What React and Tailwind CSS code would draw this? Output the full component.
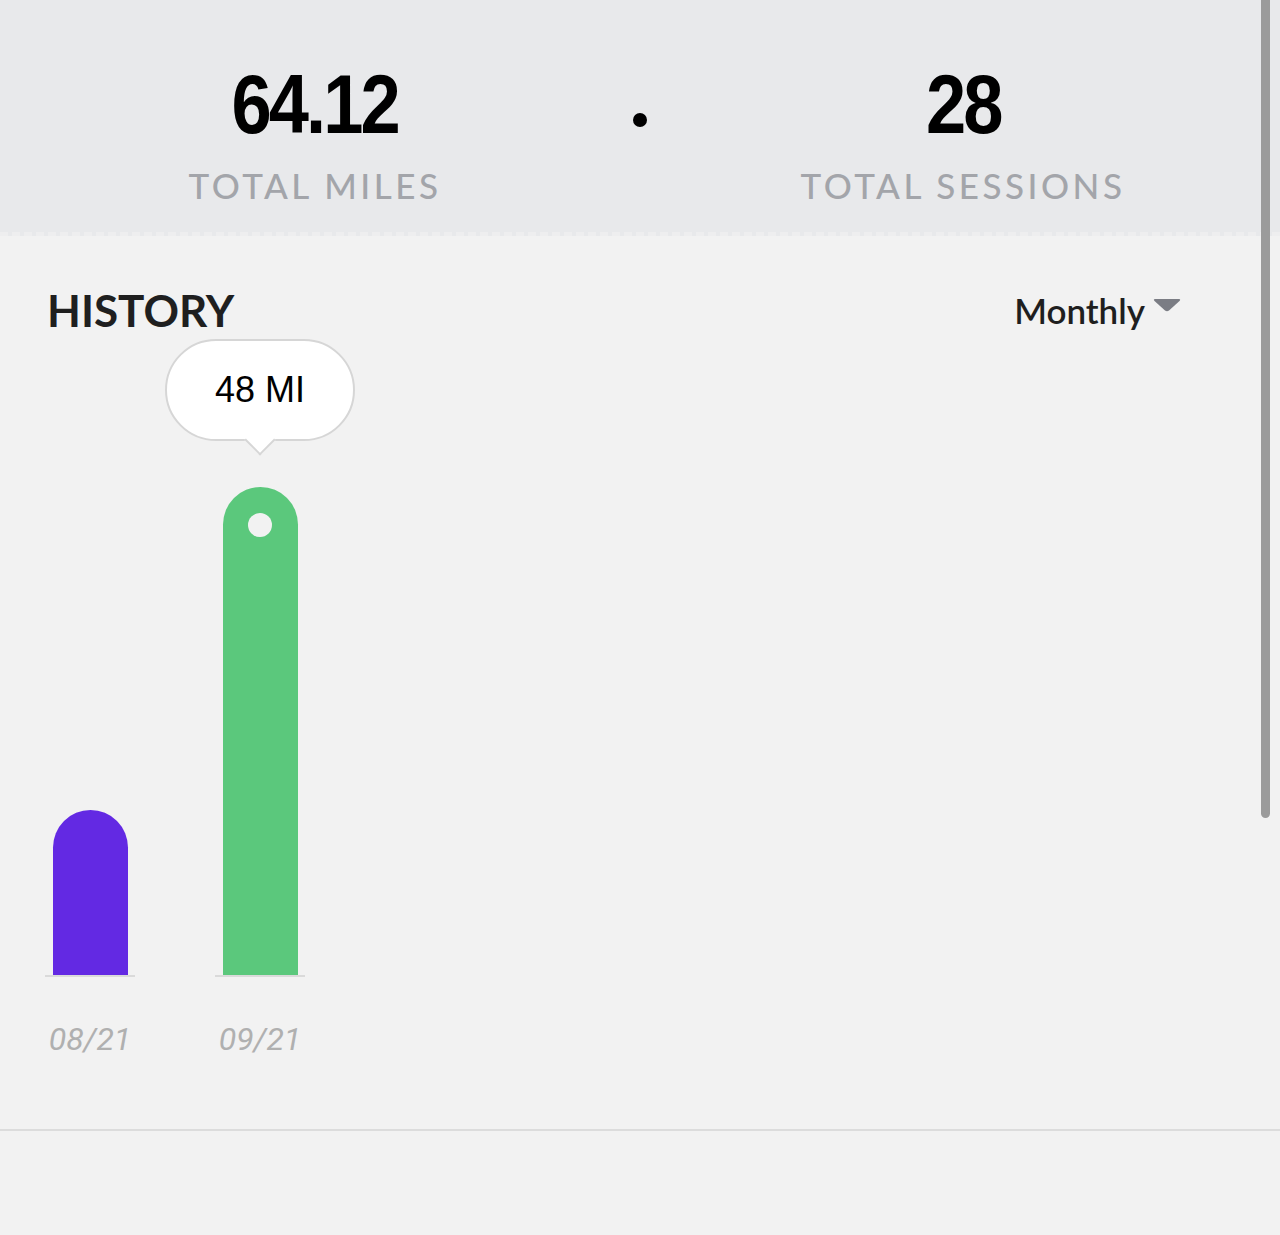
import React from 'react';

const stats = [
  { value: '64.12', label: 'TOTAL MILES' },
  { value: '28', label: 'TOTAL SESSIONS' },
];

const bars = [
  { month: '08/21', height: 165, color: 'bg-[#6329e3]' },
  { month: '09/21', height: 488, color: 'bg-[#5bc87c]', active: true, miles: '48 MI' },
];

function Stat({ value, label }) {
  return (
    <div className="flex flex-col items-center">
      <div className="font-['Liberation_Sans',sans-serif] font-bold text-[84px] leading-none tracking-[-0.04em] text-black scale-x-[0.86]">
        {value}
      </div>
      <div className="mt-[22px] font-['Lato',sans-serif] font-medium text-[35px] leading-none tracking-[0.1em] text-[#a3a5aa]">
        {label}
      </div>
    </div>
  );
}

function Bar({ month, height, color, active, miles }) {
  return (
    <div className="relative flex w-[90px] flex-col items-center">
      {active && (
        <div className="absolute bottom-full mb-[36px] flex flex-col items-center">
          <div className="flex h-[102px] w-[190px] items-center justify-center rounded-full border-2 border-[#d6d6d6] bg-white">
            <span className="font-['Liberation_Sans',sans-serif] text-[36px] text-black">{miles}</span>
          </div>
          <div className="-mt-[12px] h-[22px] w-[22px] rotate-45 border-b-2 border-r-2 border-[#d6d6d6] bg-white" />
        </div>
      )}
      <div className={`relative w-[75px] rounded-t-full ${color}`} style={{ height }}>
        {active && <div className="absolute left-1/2 top-[26px] h-[24px] w-[24px] -translate-x-1/2 rounded-full bg-[#f2f2f2]" />}
      </div>
      <div className="h-[2px] w-[90px] bg-[#dadada]" />
      <div className="mt-[46px] font-['Roboto',sans-serif] italic text-[32px] leading-none text-[#b0b0b0]">{month}</div>
    </div>
  );
}

export default function App() {
  return (
    <div className="relative min-h-[1235px] w-[1280px] overflow-hidden bg-[#f2f2f2]">
      <header className="flex h-[236px] items-start border-b-4 border-dashed border-[#eeeeef] bg-[#e8e9eb] pt-[62px]">
        <div className="w-[630px]">
          <Stat {...stats[0]} />
        </div>
        <div className="flex w-[20px] justify-center pt-[51px]">
          <div className="h-[14px] w-[14px] rounded-full bg-black" />
        </div>
        <div className="w-[626px]">
          <Stat {...stats[1]} />
        </div>
      </header>

      <section className="px-[47px] pt-[48px]">
        <div className="flex items-center justify-between pr-[52px]">
          <h2 className="font-['Lato',sans-serif] font-bold text-[44px] leading-none text-[#1f1f1f]">HISTORY</h2>
          <button type="button" className="flex items-center gap-[8px] font-['Lato',sans-serif] font-semibold text-[35px] text-[#1f1f1f]">
            Monthly
            <svg width="28" height="14" viewBox="0 0 28 14" className="-mt-[10px]">
              <path d="M2 1 H26 Q28 1 26.5 3 L16 12.5 Q14 14 12 12.5 L1.5 3 Q0 1 2 1 Z" fill="#7b7d84" />
            </svg>
          </button>
        </div>

        <div className="mt-[150px] flex items-end gap-[80px] -ml-[2px]">
          {bars.map((b) => (
            <Bar key={b.month} {...b} />
          ))}
        </div>
      </section>

      <div className="mt-[74px] h-[2px] w-full bg-[#dcdcdc]" />

      <div className="absolute right-[10px] top-0 h-[818px] w-[9px] rounded-b-full bg-[#9b9b9b]" />
    </div>
  );
}
